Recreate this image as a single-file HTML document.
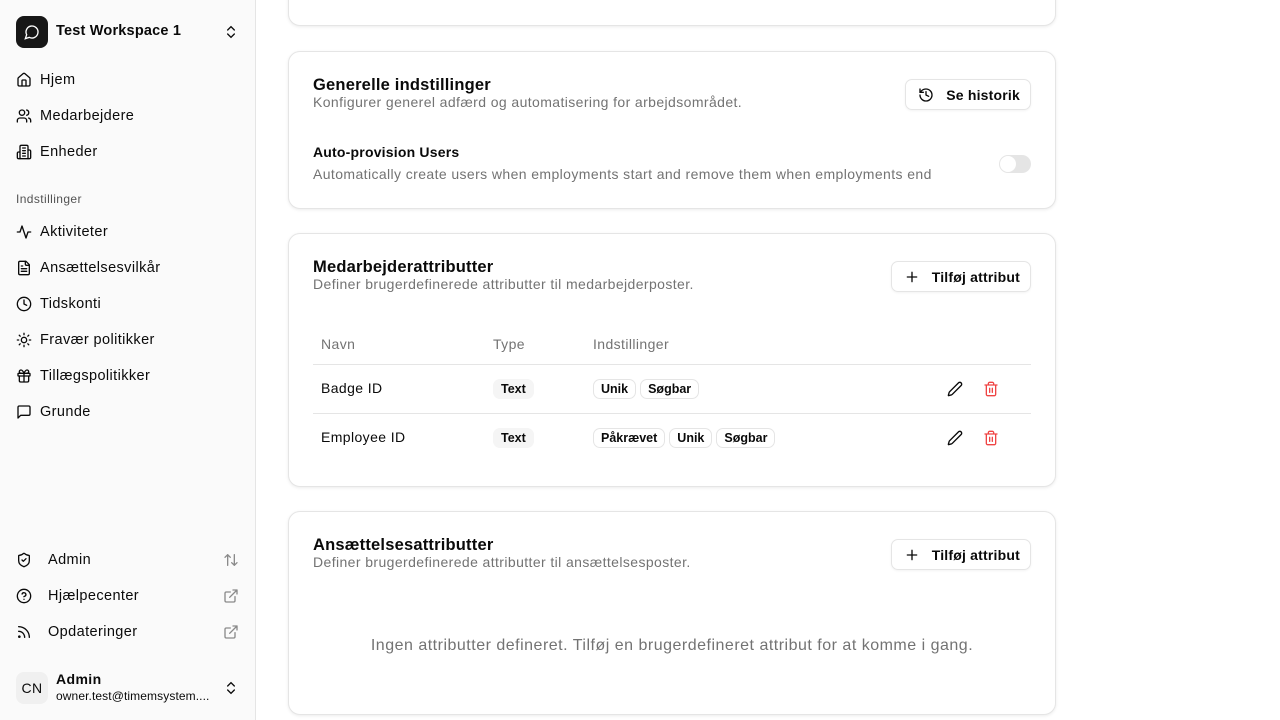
<!DOCTYPE html>
<html><head><meta charset="utf-8"><style>
*{box-sizing:border-box;margin:0;padding:0}
body{width:1280px;height:720px;overflow:hidden;background:#fff;font-family:"Liberation Sans","DejaVu Sans",sans-serif;color:#0a0a0a;position:relative;font-size:14px;letter-spacing:.4px}
.sb{position:absolute;left:0;top:0;width:256px;height:720px;background:#fafafa;border-right:1px solid #e5e5e5}
.it{position:absolute;left:16px;display:flex;align-items:center;font-size:14.5px;height:20px}
.it svg{width:16px;height:16px;margin-right:8px;fill:none;stroke:#0a0a0a;stroke-width:2;stroke-linecap:round;stroke-linejoin:round}
.card{position:absolute;left:288px;width:768px;border:1px solid #e5e5e5;border-radius:12px;box-shadow:0 1px 3px rgba(0,0,0,.08);background:#fff}
.h{position:absolute;left:24px;font-size:16.5px;font-weight:bold;letter-spacing:.2px}
.d{position:absolute;left:24px;color:#737373;font-size:14px}
.btn{position:absolute;right:24px;height:31px;border:1px solid #e5e5e5;border-radius:7px;display:flex;align-items:center;padding:0 10px 0 12px;font-weight:bold;font-size:14px;letter-spacing:.2px;box-shadow:0 1px 2px rgba(0,0,0,.05)}
.btn svg{width:16px;height:16px;margin-right:12px;fill:none;stroke:#0a0a0a;stroke-width:2;stroke-linecap:round;stroke-linejoin:round}
.tg{display:inline-block;font-size:12.5px;font-weight:bold;padding:2px 7px;border:1px solid #e5e5e5;border-radius:7px;margin-right:4px;letter-spacing:0}
.tt{display:inline-block;font-size:12.5px;font-weight:bold;padding:3px 8px;background:#f5f5f5;border-radius:7px;letter-spacing:0}
.row{position:absolute;left:24px;width:718px;height:49px;border-top:1px solid #e5e5e5}
.row>div{position:absolute;top:14px}
.ic{position:absolute;width:16px;height:16px;fill:none;stroke-width:2;stroke-linecap:round;stroke-linejoin:round}
</style></head><body>
<div class="sb">
<div style="position:absolute;left:16px;top:16px;width:32px;height:32px;background:#171717;border-radius:8px"><svg style="position:absolute;left:8px;top:8px" width="16" height="16" viewBox="0 0 24 24" fill="none" stroke="#fff" stroke-width="2"><path d="M7.9 20A9 9 0 1 0 4 16.1L2 22Z"/></svg></div>
<div style="position:absolute;left:56px;top:23px;font-weight:bold;font-size:14.5px;letter-spacing:.2px">Test Workspace 1</div>
<svg style="position:absolute;left:223px;top:24px" width="16" height="16" viewBox="0 0 24 24" fill="none" stroke="#0a0a0a" stroke-width="2" stroke-linecap="round"><path d="m7 15 5 5 5-5M7 9l5-5 5 5"/></svg>
<div class="it" style="top:70px"><svg viewBox="0 0 24 24"><path d="M15 21v-8a1 1 0 0 0-1-1h-4a1 1 0 0 0-1 1v8"/><path d="M3 10a2 2 0 0 1 .7-1.5l7-6a2 2 0 0 1 2.6 0l7 6A2 2 0 0 1 21 10v9a2 2 0 0 1-2 2H5a2 2 0 0 1-2-2z"/></svg>Hjem</div>
<div class="it" style="top:106px"><svg viewBox="0 0 24 24"><path d="M16 21v-2a4 4 0 0 0-4-4H6a4 4 0 0 0-4 4v2"/><circle cx="9" cy="7" r="4"/><path d="M22 21v-2a4 4 0 0 0-3-3.9M16 3.1a4 4 0 0 1 0 7.8"/></svg>Medarbejdere</div>
<div class="it" style="top:142px"><svg viewBox="0 0 24 24"><path d="M6 22V4a2 2 0 0 1 2-2h8a2 2 0 0 1 2 2v18Z"/><path d="M6 12H4a2 2 0 0 0-2 2v6a2 2 0 0 0 2 2h2M18 9h2a2 2 0 0 1 2 2v9a2 2 0 0 1-2 2h-2M10 6h4M10 10h4M10 14h4M10 18h4"/></svg>Enheder</div>
<div style="position:absolute;left:16px;top:192px;font-size:12px;color:#525252">Indstillinger</div>
<div class="it" style="top:222px"><svg viewBox="0 0 24 24"><path d="M22 12h-4l-3 9L9 3l-3 9H2"/></svg>Aktiviteter</div>
<div class="it" style="top:258px"><svg viewBox="0 0 24 24"><path d="M15 2H6a2 2 0 0 0-2 2v16a2 2 0 0 0 2 2h12a2 2 0 0 0 2-2V7Z"/><path d="M14 2v4a2 2 0 0 0 2 2h4M10 9H8M16 13H8M16 17H8"/></svg>Ansættelsesvilkår</div>
<div class="it" style="top:294px"><svg viewBox="0 0 24 24"><circle cx="12" cy="12" r="10"/><path d="M12 6v6l4 2"/></svg>Tidskonti</div>
<div class="it" style="top:330px"><svg viewBox="0 0 24 24"><circle cx="12" cy="12" r="4"/><path d="M12 2v2M12 20v2M4.9 4.9l1.4 1.4M17.7 17.7l1.4 1.4M2 12h2M20 12h2M6.3 17.7l-1.4 1.4M19.1 4.9l-1.4 1.4"/></svg>Fravær politikker</div>
<div class="it" style="top:366px"><svg viewBox="0 0 24 24"><rect x="3" y="8" width="18" height="4" rx="1"/><path d="M12 8v13M19 12v7a2 2 0 0 1-2 2H7a2 2 0 0 1-2-2v-7M7.5 8a2.5 2.5 0 0 1 0-5C10 3 12 8 12 8s2-5 4.5-5a2.5 2.5 0 0 1 0 5"/></svg>Tillægspolitikker</div>
<div class="it" style="top:402px"><svg viewBox="0 0 24 24"><path d="M21 15a2 2 0 0 1-2 2H7l-4 4V5a2 2 0 0 1 2-2h14a2 2 0 0 1 2 2z"/></svg>Grunde</div>
<div class="it" style="top:550px"><svg viewBox="0 0 24 24" style="margin-right:16px"><path d="M20 13c0 5-3.5 7.5-7.7 9a1 1 0 0 1-.7 0C7.5 20.5 4 18 4 13V6a1 1 0 0 1 1-1c2 0 4.5-1.2 6.2-2.7a1.2 1.2 0 0 1 1.5 0C14.5 3.8 17 5 19 5a1 1 0 0 1 1 1z"/><path d="m9 12 2 2 4-4"/></svg>Admin</div>
<div class="it" style="top:586px"><svg viewBox="0 0 24 24" style="margin-right:16px"><circle cx="12" cy="12" r="10"/><path d="M9.1 9a3 3 0 0 1 5.8 1c0 2-3 3-3 3M12 17h.01"/></svg>Hjælpecenter</div>
<div class="it" style="top:622px"><svg viewBox="0 0 24 24" style="margin-right:16px"><path d="M4 11a9 9 0 0 1 9 9M4 4a16 16 0 0 1 16 16"/><circle cx="5" cy="19" r="1"/></svg>Opdateringer</div>
<svg style="position:absolute;left:223px;top:552px" width="16" height="16" viewBox="0 0 24 24" fill="none" stroke="#8a8a8a" stroke-width="2" stroke-linecap="round" stroke-linejoin="round"><path d="m21 16-4 4-4-4M17 20V4M3 8l4-4 4 4M7 4v16"/></svg>
<svg style="position:absolute;left:223px;top:588px" width="16" height="16" viewBox="0 0 24 24" fill="none" stroke="#8a8a8a" stroke-width="2" stroke-linecap="round" stroke-linejoin="round"><path d="M15 3h6v6M10 14 21 3M18 13v6a2 2 0 0 1-2 2H5a2 2 0 0 1-2-2V8a2 2 0 0 1 2-2h6"/></svg>
<svg style="position:absolute;left:223px;top:624px" width="16" height="16" viewBox="0 0 24 24" fill="none" stroke="#8a8a8a" stroke-width="2" stroke-linecap="round" stroke-linejoin="round"><path d="M15 3h6v6M10 14 21 3M18 13v6a2 2 0 0 1-2 2H5a2 2 0 0 1-2-2V8a2 2 0 0 1 2-2h6"/></svg>
<div style="position:absolute;left:16px;top:672px;width:32px;height:32px;border-radius:8px;background:#f0f0f0;font-size:14px;text-align:center;line-height:32px">CN</div>
<div style="position:absolute;left:56px;top:671px;font-weight:bold;font-size:14px">Admin</div>
<div style="position:absolute;left:56px;top:689px;font-size:12px;letter-spacing:.1px">owner.test@timemsystem....</div>
<svg style="position:absolute;left:223px;top:680px" width="16" height="16" viewBox="0 0 24 24" fill="none" stroke="#0a0a0a" stroke-width="2" stroke-linecap="round"><path d="m7 15 5 5 5-5M7 9l5-5 5 5"/></svg>
</div>

<div class="card" style="top:-20px;height:46px"></div>

<div class="card" style="top:51px;height:158px">
<div class="h" style="top:24px">Generelle indstillinger</div>
<div class="d" style="top:42px">Konfigurer generel adfærd og automatisering for arbejdsområdet.</div>
<div class="btn" style="top:27px"><svg viewBox="0 0 24 24"><path d="M3 12a9 9 0 1 0 9-9 9.75 9.75 0 0 0-6.74 2.74L3 8"/><path d="M3 3v5h5M12 7v5l4 2"/></svg>Se historik</div>
<div style="position:absolute;left:24px;top:92px;font-weight:bold;font-size:14px;letter-spacing:.2px">Auto-provision Users</div>
<div class="d" style="top:114px">Automatically create users when employments start and remove them when employments end</div>
<div style="position:absolute;right:24px;top:103px;width:32px;height:18px;border-radius:9px;background:#e5e5e5"><div style="position:absolute;left:1px;top:1px;width:16px;height:16px;border-radius:50%;background:#fff"></div></div>
</div>

<div class="card" style="top:233px;height:254px">
<div class="h" style="top:24px">Medarbejderattributter</div>
<div class="d" style="top:42px">Definer brugerdefinerede attributter til medarbejderposter.</div>
<div class="btn" style="top:27px"><svg viewBox="0 0 24 24"><path d="M5 12h14M12 5v14"/></svg>Tilføj attribut</div>
<div style="position:absolute;left:32px;top:102px;color:#737373">Navn</div>
<div style="position:absolute;left:204px;top:102px;color:#737373">Type</div>
<div style="position:absolute;left:304px;top:102px;color:#737373">Indstillinger</div>
<div class="row" style="top:130px">
<div style="left:8px;top:15px">Badge ID</div>
<div style="left:180px"><span class="tt">Text</span></div>
<div style="left:280px"><span class="tg">Unik</span><span class="tg">Søgbar</span></div>
<svg class="ic" style="left:634px;top:16px" viewBox="0 0 24 24" stroke="#0a0a0a"><path d="M21.2 6.8a1 1 0 0 0-4-4L3.8 16.2a2 2 0 0 0-.5.8l-1.3 4.4a.5.5 0 0 0 .6.6l4.4-1.3a2 2 0 0 0 .8-.5z"/></svg>
<svg class="ic" style="left:670px;top:16px" viewBox="0 0 24 24" stroke="#ef4444"><path d="M3 6h18M19 6v14c0 1-1 2-2 2H7c-1 0-2-1-2-2V6M8 6V4c0-1 1-2 2-2h4c1 0 2 1 2 2v2M10 11v6M14 11v6"/></svg>
</div>
<div class="row" style="top:179px">
<div style="left:8px;top:15px">Employee ID</div>
<div style="left:180px"><span class="tt">Text</span></div>
<div style="left:280px"><span class="tg">Påkrævet</span><span class="tg">Unik</span><span class="tg">Søgbar</span></div>
<svg class="ic" style="left:634px;top:16px" viewBox="0 0 24 24" stroke="#0a0a0a"><path d="M21.2 6.8a1 1 0 0 0-4-4L3.8 16.2a2 2 0 0 0-.5.8l-1.3 4.4a.5.5 0 0 0 .6.6l4.4-1.3a2 2 0 0 0 .8-.5z"/></svg>
<svg class="ic" style="left:670px;top:16px" viewBox="0 0 24 24" stroke="#ef4444"><path d="M3 6h18M19 6v14c0 1-1 2-2 2H7c-1 0-2-1-2-2V6M8 6V4c0-1 1-2 2-2h4c1 0 2 1 2 2v2M10 11v6M14 11v6"/></svg>
</div>
</div>

<div class="card" style="top:511px;height:204px">
<div class="h" style="top:24px">Ansættelsesattributter</div>
<div class="d" style="top:42px">Definer brugerdefinerede attributter til ansættelsesposter.</div>
<div class="btn" style="top:27px"><svg viewBox="0 0 24 24"><path d="M5 12h14M12 5v14"/></svg>Tilføj attribut</div>
<div style="position:absolute;left:0;width:100%;top:125px;text-align:center;color:#737373;font-size:16px;letter-spacing:.5px">Ingen attributter defineret. Tilføj en brugerdefineret attribut for at komme i gang.</div>
</div>
</body></html>
